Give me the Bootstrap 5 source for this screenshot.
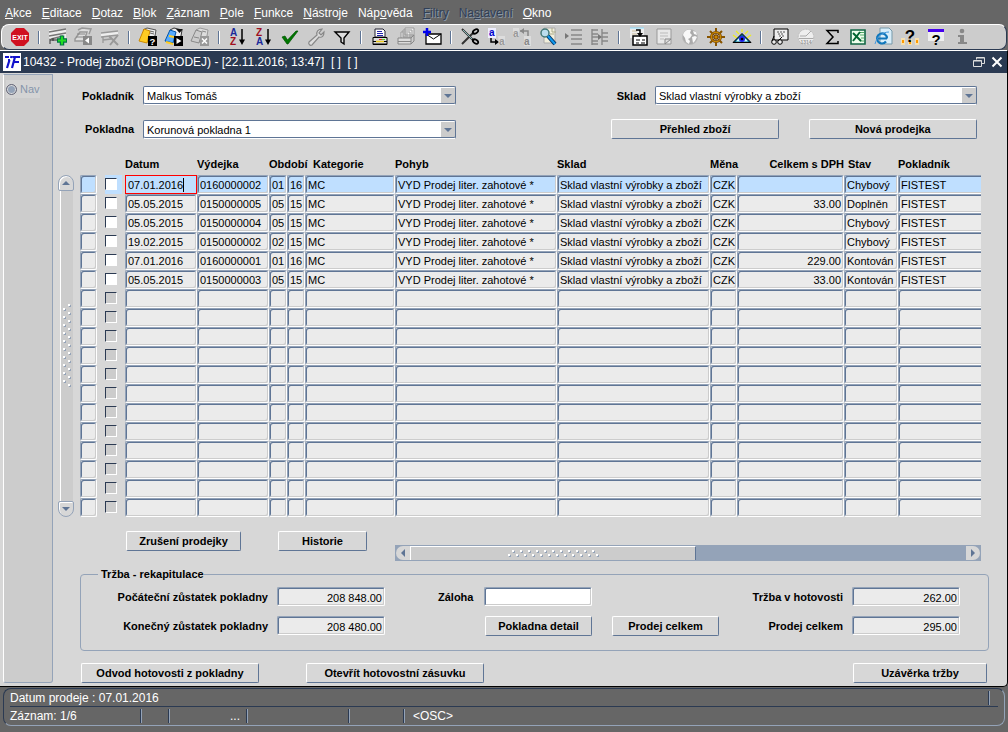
<!DOCTYPE html>
<html lang="cs">
<head>
<meta charset="utf-8">
<meta name="viewport" content="width=device-width, initial-scale=1">
<title>10432 - Prodej zboží (OBPRODEJ)</title>
<link href="https://cdn.jsdelivr.net/npm/bootstrap@5.3.0/dist/css/bootstrap.min.css" rel="stylesheet">
<style>
:root{--navy:#2b3a52;--blue:#5f7595;--mist:#94a3b8;--face:#d7d7d7;--pane:#ccc;--cell:#ebebeb;--sel:#bfdfff}
body{font-family:"Liberation Sans",Arial,sans-serif;font-size:11px;line-height:14px;color:#000;background:#666;min-height:100vh}
.menu-line{height:24px;padding:3px 5px 0;gap:10px;font-size:12px;line-height:20px}
.menu-line a{color:#fff;text-decoration:none;white-space:nowrap}
.menu-line a.off{color:#2f3f57;text-shadow:1px 1px #8a97a8}
.tool-strip{margin:0 1px;height:26px;padding:0 5px;background:var(--pane);border-radius:8px;border:1px solid #fff;border-bottom-color:var(--navy);border-right-color:var(--navy)}
.tool{width:26px;height:24px;padding:0;border:0;background:none;display:flex;align-items:center;justify-content:center;flex:none}
.tool svg{width:20px;height:20px;overflow:visible}
.tool text{font-family:"Liberation Sans",Arial,sans-serif;font-weight:bold}
.sep{width:12px;flex:none;display:flex;justify-content:center}
.sep i{width:2px;height:13px;border-left:1px solid var(--blue);border-right:1px solid #fff}
.window{border:1px solid #000;border-left:0;border-top-color:#fff;border-radius:0 0 5px 0;background:var(--face)}
.title-line{height:22px;background:var(--navy);color:#fff;font-size:12px;line-height:22px;padding:0 4px 0 3px;gap:2px;white-space:pre}
.title-line button{border:0;background:none;padding:0;line-height:0}
.nav-pane{width:50px;margin:1px 0 3px 3px;padding:5px 2px;background:var(--pane);border:1px solid var(--mist);border-left-color:#fff;border-radius:0 0 3px 3px;flex:none}
.nav-pane label{background:#d4d4d4;color:#8594ab;width:34px;height:18px;line-height:17px;font-size:11px;gap:3px}
.nav-pane input{appearance:none;width:11px;height:11px;border-radius:50%;background:var(--mist);border:1px solid #667;box-shadow:inset 0 0 0 1px #ddd;margin:0}
.face-main{padding:13px 26px 2px 27px;min-width:0}
.cap{font-weight:bold;white-space:nowrap}
.top-form{padding-right:4px;row-gap:14px}
.left-part{flex:0 1 376px;gap:9px}
.right-part{flex:0 1 366px;gap:9px}
.cap-l{width:54px;flex:none;text-align:right}
.cap-s{width:35px;flex:none;text-align:right}
.combo,.entry,.grid-form td.f{border:1px solid;border-color:var(--mist) #fff #fff var(--mist);border-radius:2px;box-shadow:inset 1px 1px var(--blue),inset -1px -1px var(--pane)}
.combo{appearance:none;height:19px;padding:1px 18px 0 3px;width:100%;color:#000;
 background:#fff url("data:image/svg+xml,%3Csvg xmlns='http://www.w3.org/2000/svg' viewBox='0 0 14 16'%3E%3Cpath fill='%23ccc' d='M0 0h14v16H0z'/%3E%3Cpath fill='%235f7595' d='M3 6h8l-4 4z'/%3E%3C/svg%3E") no-repeat right 0 top 1px/14px 16px;
 border-color:var(--blue) var(--blue) #fff;box-shadow:inset 0 -1px var(--blue)}
.push{height:20px;padding:0;border:1px solid;border-color:#fff var(--blue) var(--blue) #fff;border-radius:2px;background:var(--face);font-weight:bold;line-height:18px;white-space:nowrap;color:#000}
.entry{height:19px;width:108px;padding:2px 2px 0 3px;text-align:right;background:var(--cell);flex:none}
.grid-form{table-layout:fixed;border-collapse:separate;border-spacing:0;width:100%}
.grid-form th{height:18px;padding:0 0 4px;vertical-align:bottom;white-space:nowrap;line-height:14px}
.grid-form td{height:19px;padding:0;line-height:14px;white-space:nowrap}
.grid-form td.f{background:var(--cell);padding:1px 2px 0 2px;overflow:hidden}
.grid-form td.f:last-child{border-right:0;border-radius:2px 0 0 2px;box-shadow:inset 1px 1px var(--blue),inset 0 -1px var(--pane)}
.grid-form tr.cur td.f{background:var(--sel)}
.grid-form tr.cur td.f.editing{padding:0 0 0 1px;border:1px solid #f00;box-shadow:none;border-radius:0}
.editing input{border:0;padding:1px 0 0 1px;background:none;width:56px;outline:0}
.caret{width:1px;height:14px;background:#000}
.tick{appearance:none;display:block;width:12px;height:12px;margin:0;border:1px solid;border-color:var(--navy) #fff #fff var(--navy);background:#fff}
.tick:disabled{background:var(--pane);opacity:1}
.tickbox{width:17px;height:19px;padding:3px 0 0;margin-left:8px}
.cur .tickbox{background:var(--sel)}
.v-scroll{width:16px;margin:18px 6px 0 -22px;flex:none}
.v-scroll button{height:16px;padding:0;border:1px solid var(--mist);background:var(--face);line-height:0;box-shadow:inset 1px 1px #fff}
.cap-up{border-radius:8px 8px 2px 2px}
.cap-down{border-radius:2px 2px 8px 8px}
.v-rail{background:var(--pane);border-left:1px solid #fff;width:13px;margin:0 auto}
.h-scroll{height:16px;background:var(--mist);padding:1px;min-width:0}
.h-scroll button{width:14px;padding:0;border:0;background:var(--face);line-height:0;flex:none}
.cap-left{border-radius:8px 0 0 8px}
.cap-right{border-radius:0 8px 8px 0}
.h-thumb{width:49%;background:var(--pane);border-left:1px solid #fff;border-top:1px solid #fff;border-right:1px solid var(--blue)}
.act-row{width:315px;flex:none;padding-left:46px;gap:37px}
.recap{border:1px solid var(--mist);border-radius:4px;margin:6px -8px 0 0;padding:6px 28px 14px 8px}
.recap legend{float:none;width:auto;font-size:11px;line-height:14px;margin:-4px 0 0 9px;padding:0 0 0 3px}
.field-col{row-gap:10px}
.field-col>div{gap:9px}
.col-start{width:296px}
.col-mid{margin-left:53px}
.col-mid .cap{width:37px}
.col-mid .btn-pair{gap:20px;margin-left:47px}
.foot-row{margin:12px -6px 0 1px;gap:47px}
.w-a{width:178px}.w-b{width:134px}.w-c{width:107px}.w-d{width:115px}.w-e{width:89px}.w-half{width:46%}
.status{margin:1px 3px 6px;border:1px solid;border-color:var(--navy) var(--mist) var(--mist) var(--navy);border-radius:8px;color:#fff;font-size:12px;padding:0 6px}
.status .st{height:18px;line-height:18px}
.status .st-top{border-bottom:1px solid var(--navy)}
.bar{align-self:center;width:2px;height:14px;border-left:1px solid var(--navy);border-right:1px solid var(--mist);flex:none}
.s1{width:130px}.s2{width:26px}.s3{width:76px;padding-right:6px}.s4{width:100px}.s5{width:53px}
</style>
</head>
<body class="d-flex flex-column">
<nav class="menu-line d-flex">
<a href="#"><u>A</u>kce</a><a href="#"><u>E</u>ditace</a><a href="#"><u>D</u>otaz</a><a href="#"><u>B</u>lok</a><a href="#"><u>Z</u>áznam</a><a href="#"><u>P</u>ole</a><a href="#"><u>F</u>unkce</a><a href="#"><u>N</u>ástroje</a><a href="#">Náp<u>o</u>věda</a><a href="#" class="off"><u>F</u>iltry</a><a href="#" class="off">Na<u>s</u>tavení</a><a href="#"><u>O</u>kno</a>
</nav>
<div class="tool-strip d-flex align-items-center overflow-hidden" role="toolbar" aria-label="Nástroje">
<button class="tool" aria-label="Konec"><svg viewBox="0 0 20 20"><path d="M6 1h8l5 5v8l-5 5H6l-5-5V6z" fill="#d01020"/><text x="10" y="13" font-size="7" fill="#fff" text-anchor="middle">EXIT</text></svg></button>
<span class="sep"><i></i></span>
<button class="tool" aria-label="Vložit záznam"><svg viewBox="0 0 20 20"><path d="M1 3l17-1v9H1z" fill="#eee"/><path d="M1 5l17-3M1 9l17-3M3 12l12-3" stroke="#777" stroke-width="1.400"/><path d="M2 12v5M5 11v3M2 13h7" stroke="#333"/><path d="M14 8.500v10M9 13.500h10" stroke="#074" stroke-width="4.500"/><path d="M14 9.500v8M10 13.500h8" stroke="#2d2" stroke-width="2"/></svg></button>
<button class="tool" aria-label="Předchozí blok"><svg viewBox="0 0 20 20"><path d="M4 3l4-2 9 1-2 5M1 12l5-7h7l-3 9H1z" fill="#ddd" stroke="#999" stroke-width="1.500"/><path d="M2 10h8M3 7h8" stroke="#888"/><path d="M9 9h9v9H9z" fill="#888"/><path d="M15 10.500v6l-4-3z" fill="#fff"/></svg></button>
<button class="tool" aria-label="Smazat záznam"><svg viewBox="0 0 20 20"><path d="M1 6l17-2v4L1 10z" fill="#eee"/><path d="M1 6l17-2M1 10l17-2M3 13l8-1M3 10v6" stroke="#999" stroke-width="1.300"/><path d="M9 9l9 9M18 8l-8 10" stroke="#999" stroke-width="2"/></svg></button>
<span class="sep"><i></i></span>
<button class="tool" aria-label="Zadat dotaz"><svg viewBox="0 0 20 20"><path d="M5 3l4-2 9 2-1 6-4 3z" fill="#eee" stroke="#555"/><path d="M1 14L6 2l6 2-3 12z" fill="#fc2" stroke="#c80"/><path d="M12 4l4 1M12 6l4 1" stroke="#666"/><path d="M10 9h9v10h-9z" fill="#000"/><text x="14.500" y="17.500" font-size="9.500" fill="#fff" text-anchor="middle">?</text></svg></button>
<button class="tool" aria-label="Provést dotaz"><svg viewBox="0 0 20 20"><path d="M6 3l4-2 8 2-1 6-4 3z" fill="#eee" stroke="#333"/><path d="M1 14L6 3l6 2-3 11z" fill="#5af" stroke="#05a"/><path d="M2 15l7 2M5 9l5 1" stroke="#fc2" stroke-width="2"/><path d="M12 2h7l-3.500 4z" fill="#111"/><path d="M10 9h9v10h-9z" fill="#000"/><path d="M12.500 11v6l5-3z" fill="#fff"/></svg></button>
<button class="tool" aria-label="Zrušit dotaz"><svg viewBox="0 0 20 20"><path d="M6 3l4-2 8 2-1 6-4 3z" fill="#ddd" stroke="#999"/><path d="M1 14L6 3l6 2-3 11z" fill="#ccc" stroke="#888"/><path d="M4 10l5 1M12 4l4 1" stroke="#888"/><path d="M10 9h9v10h-9z" fill="#999"/><path d="M12 11.500l5 5M17 11.500l-5 5" stroke="#fff" stroke-width="1.500"/></svg></button>
<span class="sep"><i></i></span>
<button class="tool" aria-label="Třídit vzestupně"><svg viewBox="0 0 20 20"><text x="2" y="9" font-size="10" fill="#1a2a9a">A</text><text x="2" y="18" font-size="10" fill="#a01020">Z</text><path d="M14 2v14" stroke="#000" stroke-width="1.500"/><path d="M11 12.500h6L14 18z"/></svg></button>
<button class="tool" aria-label="Třídit sestupně"><svg viewBox="0 0 20 20"><text x="2" y="9" font-size="10" fill="#a01020">Z</text><text x="2" y="18" font-size="10" fill="#1a2a9a">A</text><path d="M14 2v14" stroke="#000" stroke-width="1.500"/><path d="M11 12.500h6L14 18z"/></svg></button>
<button class="tool" aria-label="Uložit"><svg viewBox="0 0 20 20"><path d="M2 10l3-1 2.500 4L16 4h2L8 17H7z" fill="#070" stroke="#050" stroke-width=".7"/></svg></button>
<button class="tool" aria-label="Nastavení"><svg viewBox="0 0 20 20"><path d="M3 15l8-7c-1-3 1-6 5-6l-3 4 2 2 3-3c0 4-2 6-5 5l-7 8c-2 1-4-1-3-3z" fill="#ddd" stroke="#888" stroke-width="1.200"/></svg></button>
<button class="tool" aria-label="Filtr"><svg viewBox="0 0 20 20"><path d="M3 5h14l-5 6v6l-3-2v-4z" fill="#ddd" stroke="#000" stroke-width="1.400"/></svg></button>
<span class="sep"><i></i></span>
<button class="tool" aria-label="Tisk"><svg viewBox="0 0 20 20"><path d="M5 2h8l2 2v6H5z" fill="#fff" stroke="#223"/><path d="M7 4.500h5M7 6.500h6M7 8.500h6" stroke="#22a"/><path d="M3 10.500h14v7H3z" fill="#ddd" stroke="#000"/><path d="M3 14.500h14M3 17h14" stroke="#000"/><path d="M9 12.500h3" stroke="#e22"/><path d="M12 12.500h3" stroke="#4c2"/><path d="M6 14.500h8" stroke="#ec2" stroke-width="1.300"/></svg></button>
<button class="tool" aria-label="Tisk více"><svg viewBox="0 0 20 20"><path d="M9 1h9v7h-9zM7 3h9v7H7zM5 5h9v6H5z" fill="#eee" stroke="#999"/><path d="M7 7h5M7 9h5" stroke="#999"/><path d="M2 11h13v6H2z" fill="#ddd" stroke="#888"/><path d="M2 14.500h13M15 11l3-3v6l-3 3" fill="none" stroke="#888"/></svg></button>
<button class="tool" aria-label="Odeslat poštou"><svg viewBox="0 0 20 20"><path d="M4 7h15v10H4z" fill="#fff" stroke="#000" stroke-width="1.300"/><path d="M4 7l7.500 5L19 7" fill="none" stroke="#000"/><path d="M5 1v8M1 5h8" stroke="#00e" stroke-width="2.500"/></svg></button>
<span class="sep"><i></i></span>
<button class="tool" aria-label="Vyjmout"><svg viewBox="0 0 20 20"><path d="M2 2l12 12M2 17L14 5" stroke="#333" stroke-width="2"/><path d="M3 3l9 9" stroke="#8bb" stroke-width="1"/><ellipse cx="15.500" cy="4.500" rx="3" ry="1.800" transform="rotate(-35 15.500 4.500)" fill="none" stroke="#000" stroke-width="1.700"/><ellipse cx="15.500" cy="14.500" rx="3" ry="1.800" transform="rotate(35 15.500 14.500)" fill="none" stroke="#000" stroke-width="1.700"/></svg></button>
<button class="tool" aria-label="Kopírovat"><svg viewBox="0 0 20 20"><path d="M2 1h8v10H2z" fill="#eef"/><text x="3" y="9" font-size="10" fill="#00c">a</text><path d="M5 11v4h5" fill="none" stroke="#000" stroke-width="1.500"/><path d="M9 12l4 3-4 3z"/><path d="M12 9h7v9h-6" fill="#ddd"/><text x="13" y="18" font-size="10" fill="#999">a</text></svg></button>
<button class="tool" aria-label="Vložit"><svg viewBox="0 0 20 20"><path d="M1 1h6v9H1zM12 9h7v10h-7z" fill="#ddd"/><text x="1" y="10" font-size="10" fill="#999">a</text><path d="M8 4h8v5" fill="none" stroke="#888" stroke-width="1.500"/><path d="M12 1v6L8 4z" fill="#888"/><text x="12" y="18" font-size="10" fill="#888">a</text></svg></button>
<button class="tool" aria-label="Hledat"><svg viewBox="0 0 20 20"><path d="M6 1h11v15H6z" fill="#f2efdc" stroke="#aaa"/><path d="M14 1v4h4M12 7h4" fill="none" stroke="#aa8"/><circle cx="7" cy="6" r="4" fill="#bde" stroke="#477" stroke-width="1.500"/><path d="M10 9l7 8" stroke="#036" stroke-width="4"/><path d="M10 9l7 8" stroke="#19e" stroke-width="2"/></svg></button>
<button class="tool" aria-label="Seznam"><svg viewBox="0 0 20 20"><path d="M7 3h11M7 8h11M7 12h11M7 17h11" stroke="#888" stroke-width="1.500"/><path d="M1 6l4 3-4 3z" fill="#777"/></svg></button>
<button class="tool" aria-label="Seznam s výběrem"><svg viewBox="0 0 20 20"><path d="M2 2v16M2 3h6M2 7h6M2 10h6M2 14h6M2 17h6M12 2v16M12 6h6M12 10h6M12 14h6" stroke="#888" stroke-width="1.400"/><path d="M8 7l4 3-4 3z" fill="#777"/></svg></button>
<span class="sep"><i></i></span>
<button class="tool" aria-label="Kalendář"><svg viewBox="0 0 20 20"><path d="M2 1h14v10H2z" fill="#eee"/><path d="M2 1h14" stroke="#8df"/><path d="M4 4h5M4 7h5" stroke="#cb9"/><path d="M5 9h14v9H5z" fill="#fff" stroke="#000" stroke-width="1.500"/><path d="M8 13h4M14 13h3M8 16h3M13 16h4" stroke="#000"/><path d="M8 3h4v4" fill="none" stroke="#000" stroke-width="1.500"/><path d="M9 6h6l-3 4z"/></svg></button>
<button class="tool" aria-label="Poznámka"><svg viewBox="0 0 20 20"><path d="M3 2h14v15H3z" fill="#e8e8e8" stroke="#999"/><path d="M6 6h8M6 9h8M6 12h4" stroke="#bbb"/><path d="M11 17v-5h6z" fill="#ddd" stroke="#888"/></svg></button>
<button class="tool" aria-label="Web"><svg viewBox="0 0 20 20"><circle cx="10" cy="10" r="7.500" fill="#aaa" stroke="#bbb"/><path d="M3 8c1-4 4-6 8-5l-1 3 2 2-2 3-2 1 2 2-1 3-3-2-1-4zM13 4l3 1 1 3-3-1zM12 10l3-1 2 1-2 4-2 2z" fill="#f8f8f8"/></svg></button>
<button class="tool" aria-label="Navigace"><svg viewBox="0 0 20 20"><path d="M2 10h16M10 2v16M5 5l10 10M15 5L5 15" stroke="#740" stroke-width="1.300"/><circle cx="10" cy="10" r="4.800" fill="none" stroke="#740" stroke-width="2.400"/><circle cx="10" cy="10" r="4.800" fill="none" stroke="#d90" stroke-width="1"/><path d="M1 10h3M16 10h3M10 1v3M10 16v3M4 4l2 2M16 4l-2 2M4 16l2-2M16 16l-2-2" stroke="#850" stroke-width="2"/><circle cx="10" cy="10" r="1.500" fill="#c80"/></svg></button>
<button class="tool" aria-label="Náhled"><svg viewBox="0 0 20 20"><path d="M10 2v3M4 4l3 3M16 4l-3 3M1 8l4 3M19 8l-4 3" stroke="#ee2" stroke-width="1.300"/><path d="M1 15.500l9-9 9 9z" fill="#068" stroke="#000"/><path d="M4 14.500q6-9 12 0z" fill="#cff"/><circle cx="10" cy="12" r="3" fill="#22e"/><circle cx="10" cy="12" r="1.300"/></svg></button>
<span class="sep"><i></i></span>
<button class="tool" aria-label="Prohlížet"><svg viewBox="0 0 20 20"><path d="M4 2h14v11H4z" fill="#eee" stroke="#000"/><path d="M7 5h8M8 7h6M9 9h6" stroke="#555" stroke-dasharray="2 1"/><circle cx="4" cy="15" r="2.300" fill="#eee" stroke="#000"/><circle cx="10" cy="15" r="2.300" fill="#eee" stroke="#000"/><path d="M2 14l2-5M8 14l4-4" stroke="#000"/></svg></button>
<button class="tool" aria-label="Čas"><svg viewBox="0 0 20 20"><circle cx="10" cy="10" r="7.800" fill="#eee" stroke="#bbb" stroke-dasharray="2 1"/><path d="M4 9h6l5-5M3 11.500h14" fill="none" stroke="#aaa"/><text x="10" y="16.500" font-size="5" fill="#999" text-anchor="middle">1314</text></svg></button>
<button class="tool" aria-label="Součet"><svg viewBox="0 0 20 20"><path d="M16 6V3.500H5l6 6.500-6 6.500h11V14" fill="none" stroke="#000" stroke-width="1.500"/></svg></button>
<button class="tool" aria-label="Excel"><svg viewBox="0 0 20 20"><path d="M3 3h14v14H3z" fill="#efe" stroke="#164" stroke-width="1.600"/><path d="M12 5.500h4M12 8h4M13 11h3M12 14h4" stroke="#5a6"/><path d="M5 6l8 8M12 5l-7 9" stroke="#063" stroke-width="2"/></svg></button>
<button class="tool" aria-label="Prohlížeč"><svg viewBox="0 0 20 20"><path d="M6 1h9l3 3v13H6z" fill="#d8eefa" stroke="#79a"/><path d="M13 11.500a5 5 0 1 0-1 3M3.500 11.500H13" fill="none" stroke="#17b" stroke-width="2.200"/><path d="M1 17C3 9 9 5 15 5" fill="none" stroke="#49d"/></svg></button>
<button class="tool" aria-label="Nápověda uživatele"><svg viewBox="0 0 20 20"><path d="M1 11h4v7H1zM8 12h4v6H8zM15 11h4v7h-4z" fill="#f6e0b0"/><path d="M2 13h2v3H2zM9 14h2v3H9zM16 13h2v3h-2z" fill="#f90"/><text x="10" y="15" font-size="17" text-anchor="middle">?</text></svg></button>
<button class="tool" aria-label="Nápověda"><svg viewBox="0 0 20 20"><path d="M2 2h16v12H2z" fill="#eee"/><path d="M2 3.500h16" stroke="#40e" stroke-width="3"/><text x="10" y="17.500" font-size="15" text-anchor="middle">?</text></svg></button>
<button class="tool" aria-label="Informace"><svg viewBox="0 0 20 20"><circle cx="10" cy="4" r="2.300" fill="#888"/><path d="M6 8h6v7h3v2H6v-2h2v-5H6z" fill="#888"/></svg></button>
</div>

<div class="window d-flex flex-column flex-grow-1">
<div class="title-line d-flex align-items-center">
<svg width="18" height="18" viewBox="0 0 18 18" aria-label="iF"><path d="M0 0h18v18H0z" fill="#fff"/><path d="M2 4h4M6.500 7L4 15M8.500 3l-.5 2M5 7h2M9.500 4H17M12 4L9 15M11 9h5" stroke="#11c" stroke-width="2.200" fill="none"/></svg>
<span>10432 - Prodej zboží (OBPRODEJ) - [22.11.2016; 13:47]  [ ]  [ ]</span>
<button class="ms-auto me-1" aria-label="Obnovit"><svg width="12" height="12" viewBox="0 0 12 12" fill="none" stroke="#ddd"><path d="M3.500 3.500v-2h8v6h-3M3 2h8M.500 4.500h8v6h-8zM1 5h8"/></svg></button>
<button aria-label="Zavřít"><svg width="12" height="12" viewBox="0 0 12 12"><path d="M1.500 1.500l9 9M10.500 1.500l-9 9" stroke="#fff" stroke-width="2"/></svg></button>
</div>
<div class="d-flex flex-grow-1">
<aside class="nav-pane"><label class="d-flex align-items-center"><input type="radio" name="nav" disabled>Nav</label></aside>
<main class="face-main flex-grow-1">
<div class="top-form d-flex flex-column">
<div class="d-flex justify-content-between">
<div class="left-part d-flex align-items-center"><label class="cap cap-l" for="pokladnik">Pokladník</label><select class="combo" id="pokladnik"><option>Malkus Tomáš</option></select></div>
<div class="right-part d-flex align-items-center"><label class="cap cap-s" for="sklad">Sklad</label><select class="combo" id="sklad"><option>Sklad vlastní výrobky a zboží</option></select></div>
</div>
<div class="d-flex justify-content-between">
<div class="left-part d-flex align-items-center"><label class="cap cap-l" for="pokladna">Pokladna</label><select class="combo" id="pokladna"><option>Korunová pokladna 1</option></select></div>
<div class="right-part d-flex justify-content-between"><button class="push w-half">Přehled zboží</button><button class="push w-half">Nová prodejka</button></div>
</div>
</div>

<div class="d-flex" style="margin-top:18px">
<div class="v-scroll d-flex flex-column">
<button class="cap-up" aria-label="Nahoru"><svg width="8" height="4" viewBox="0 0 8 4"><path d="M0 4h8L4 0z" fill="#5f7595"/></svg></button>
<div class="v-rail flex-grow-1 d-flex align-items-center justify-content-center"><svg width="10" height="84"><defs><pattern id="dots-v" width="10" height="8" patternUnits="userSpaceOnUse"><path d="M7 1h2v2H7zM2 5h2v2H2z" fill="#94a3b8"/><path d="M6 0h2v2H6zM1 4h2v2H1z" fill="#fff"/></pattern></defs><rect width="10" height="84" fill="url(#dots-v)"/></svg></div>
<button class="cap-down" aria-label="Dolů"><svg width="8" height="4" viewBox="0 0 8 4"><path d="M0 0h8L4 4z" fill="#5f7595"/></svg></button>
</div>
<table class="grid-form">
<colgroup><col style="width:17px"><col style="width:28px"><col style="width:72px"><col style="width:72px"><col style="width:18px"><col style="width:18px"><col style="width:90px"><col style="width:162px"><col><col style="width:27px"><col style="width:107px"><col style="width:54px"><col style="width:83px"></colgroup>
<thead><tr><th></th><th></th><th>Datum</th><th>Výdejka</th><th colspan="2">Období</th><th class="ps-2">Kategorie</th><th>Pohyb</th><th>Sklad</th><th>Měna</th><th class="text-end">Celkem s DPH</th><th class="ps-1">Stav</th><th>Pokladník</th></tr></thead>
<tbody id="rows"></tbody>
</table>
</div>

<div class="d-flex" style="margin-top:14px">
<div class="act-row d-flex align-items-start"><button class="push w-d">Zrušení prodejky</button><button class="push w-e">Historie</button></div>
<div class="h-scroll d-flex flex-grow-1 align-self-end" style="margin-top:14px">
<button class="cap-left" aria-label="Vlevo"><svg width="4" height="8"><path d="M4 0v8L0 4z" fill="#5f7595"/></svg></button>
<div class="h-thumb d-flex align-items-center justify-content-center"><svg width="92" height="9"><defs><pattern id="dots-h" width="8" height="9" patternUnits="userSpaceOnUse"><path d="M6 2h2v2H6zM2 6h2v2H2z" fill="#94a3b8"/><path d="M5 1h2v2H5zM1 5h2v2H1z" fill="#fff"/></pattern></defs><rect width="92" height="9" fill="url(#dots-h)"/></svg></div>
<button class="cap-right ms-auto" aria-label="Vpravo"><svg width="4" height="8"><path d="M0 0v8l4-4z" fill="#5f7595"/></svg></button>
</div>
</div>

<fieldset class="recap">
<legend class="cap">Tržba - rekapitulace</legend>
<div class="d-flex">
<div class="field-col col-start d-flex flex-column align-items-end">
<div class="d-flex align-items-center"><label class="cap" for="poc">Počáteční zůstatek pokladny</label><input class="entry" id="poc" value="208 848.00" readonly></div>
<div class="d-flex align-items-center"><label class="cap" for="kon">Konečný zůstatek pokladny</label><input class="entry" id="kon" value="208 480.00" readonly></div>
</div>
<div class="field-col col-mid d-flex flex-column">
<div class="d-flex align-items-center"><label class="cap" for="zal">Záloha</label><input class="entry bg-white" id="zal"></div>
<div class="btn-pair d-flex"><button class="push w-c">Pokladna detail</button><button class="push w-c">Prodej celkem</button></div>
</div>
<div class="field-col ms-auto d-flex flex-column align-items-end">
<div class="d-flex align-items-center"><label class="cap" for="hot">Tržba v hotovosti</label><input class="entry" id="hot" value="262.00" readonly></div>
<div class="d-flex align-items-center"><label class="cap" for="cel">Prodej celkem</label><input class="entry" id="cel" value="295.00" readonly></div>
</div>
</div>
</fieldset>
<div class="foot-row d-flex"><button class="push w-a">Odvod hotovosti z pokladny</button><button class="push w-a">Otevřít hotovostní zásuvku</button><button class="push w-b ms-auto">Uzávěrka tržby</button></div>
</main>
</div>
</div>

<footer class="status">
<div class="st st-top d-flex"><span>Datum prodeje : 07.01.2016</span><span class="bar ms-auto me-2"></span></div>
<div class="st d-flex"><span class="s1">Záznam: 1/6</span><i class="bar"></i><span class="s2"></span><i class="bar"></i><span class="s3 text-end">...</span><i class="bar"></i><span class="s4"></span><i class="bar"></i><span class="s5"></span><i class="bar"></i><span class="ps-2">&lt;OSC&gt;</span></div>
</footer>
<script>
const data=[["07.01.2016","0160000002","01","16","","Chybový"],["05.05.2015","0150000005","05","15","33.00","Doplněn"],["05.05.2015","0150000004","05","15","","Chybový"],["19.02.2015","0150000002","02","15","","Chybový"],["07.01.2016","0160000001","01","16","229.00","Kontován"],["05.05.2015","0150000003","05","15","33.00","Kontován"]];
let html="";
for(let i=0;i<18;i++){
 const r=data[i],v=r?[r[0],r[1],r[2],r[3],"MC","VYD Prodej liter. zahotové *","Sklad vlastní výrobky a zboží","CZK",r[4],r[5],"FISTEST"]:Array(11).fill("");
 html+=`<tr class="${i?"":"cur"}"><td class="f"></td><td><div class="tickbox"><input type="checkbox" class="tick" aria-label="Vybrat řádek ${i+1}" ${r?"":"disabled"}></div></td>`;
 v.forEach((t,k)=>{html+=i===0&&k===0?`<td class="f editing"><div class="d-flex align-items-center"><input value="${t}" aria-label="Datum"><span class="caret"></span></div></td>`:`<td class="f${k===8?" text-end":""}">${t}</td>`});
 html+="</tr>";
}
document.getElementById("rows").innerHTML=html;
</script>
<script src="https://cdn.jsdelivr.net/npm/bootstrap@5.3.0/dist/js/bootstrap.bundle.min.js"></script>
</body>
</html>
